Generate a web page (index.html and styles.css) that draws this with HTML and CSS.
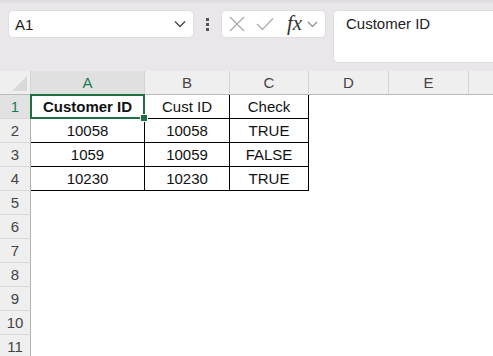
FILE: index.html
```html
<!DOCTYPE html>
<html lang="en">
<head>
    <meta charset="UTF-8">
    <title>Customer ID Check</title>
    <link rel="stylesheet" href="styles.css">
</head>
<body>
    <div class="formula-area">
        <div class="name-box">
            <span>A1</span>
            <svg width="12" height="8" viewBox="0 0 12 8"><path d="M1 1.5 L6 6.5 L11 1.5" fill="none" stroke="#444" stroke-width="1.3"/></svg>
        </div>
        <div class="grip"><i></i><i></i><i></i></div>
        <div class="fn-buttons">
            <svg class="fn-x" width="16" height="16" viewBox="0 0 16 16"><path d="M1 1 L15 15 M15 1 L1 15" stroke="#a8a8a8" stroke-width="1.2"/></svg>
            <svg class="fn-check" width="18" height="14" viewBox="0 0 18 14"><path d="M1 7 L6.5 12.5 L17 1.5" fill="none" stroke="#a8a8a8" stroke-width="1.2"/></svg>
            <span class="fx">fx</span>
            <svg width="11" height="7" viewBox="0 0 11 7"><path d="M1 1 L5.5 5.5 L10 1" fill="none" stroke="#888" stroke-width="1.1"/></svg>
        </div>
        <div class="formula-input">Customer ID</div>
    </div>

    <div class="sheet">
        <div class="row head-row">
            <div class="corner"><span class="tri"></span></div>
            <div class="col-head col-a selected">A</div>
            <div class="col-head col-b">B</div>
            <div class="col-head col-c">C</div>
            <div class="col-head col-d">D</div>
            <div class="col-head col-e">E</div>
            <div class="col-head col-f"></div>
        </div>

        <div class="row">
            <div class="row-head selected">1</div>
            <div class="cell col-a data bold active">Customer ID<span class="handle"></span></div>
            <div class="cell col-b data">Cust ID</div>
            <div class="cell col-c data">Check</div>
        </div>
        <div class="row">
            <div class="row-head">2</div>
            <div class="cell col-a data">10058</div>
            <div class="cell col-b data">10058</div>
            <div class="cell col-c data">TRUE</div>
        </div>
        <div class="row">
            <div class="row-head">3</div>
            <div class="cell col-a data">1059</div>
            <div class="cell col-b data">10059</div>
            <div class="cell col-c data">FALSE</div>
        </div>
        <div class="row">
            <div class="row-head">4</div>
            <div class="cell col-a data">10230</div>
            <div class="cell col-b data">10230</div>
            <div class="cell col-c data">TRUE</div>
        </div>
        <div class="row"><div class="row-head">5</div></div>
        <div class="row"><div class="row-head">6</div></div>
        <div class="row"><div class="row-head">7</div></div>
        <div class="row"><div class="row-head">8</div></div>
        <div class="row"><div class="row-head">9</div></div>
        <div class="row"><div class="row-head">10</div></div>
        <div class="row"><div class="row-head">11</div></div>
    </div>
</body>
</html>
```

FILE: styles.css
```css
body {
    margin: 0;
    font-family: 'Liberation Sans', Arial, sans-serif;
    background: #fff;
    color: #111;
    overflow: hidden;
}
/* Formula bar strip */
.formula-area {
    height: 71px;
    box-sizing: border-box;
    padding: 10px 0 0 8px;
    display: flex;
    align-items: flex-start;
    background: linear-gradient(#dcdadd 0, #e9e7ea 4px);
}
.name-box {
    width: 186px;
    height: 28px;
    box-sizing: border-box;
    background: #fff;
    border: 1px solid #e0dee1;
    border-radius: 5px;
    display: flex;
    align-items: center;
    justify-content: space-between;
    padding: 0 7px 0 6px;
    font-size: 15px;
    color: #222;
}
.grip {
    width: 27px;
    height: 28px;
    display: flex;
    flex-direction: column;
    align-items: center;
    justify-content: center;
    gap: 2px;
}
.grip i {
    width: 3px;
    height: 3px;
    background: #555;
}
.fn-buttons {
    width: 105px;
    height: 28px;
    box-sizing: border-box;
    background: #fff;
    border: 1px solid #e0dee1;
    border-radius: 5px;
    display: flex;
    align-items: center;
    padding-left: 7px;
}
.fn-x {
    margin-right: 11px;
}
.fn-check {
    margin-right: 13px;
}
.fx {
    font-family: 'Liberation Serif', 'Times New Roman', serif;
    font-style: italic;
    font-size: 21px;
    color: #333;
    margin-right: 5px;
    line-height: 1;
    margin-top: -2px;
}
.formula-input {
    flex: 1;
    height: 53px;
    margin-left: 7px;
    box-sizing: border-box;
    background: #fff;
    border: 1px solid #e0dee1;
    border-right: none;
    border-radius: 5px 0 0 5px;
    padding: 4px 0 0 12px;
    font-size: 15px;
    color: #222;
}
/* Grid */
.row {
    display: flex;
    height: 24px;
}
.head-row {
    background: #efefef;
    border-bottom: 1px solid #bcbcbc;
    height: 24px;
    box-sizing: border-box;
}
.corner {
    width: 31px;
    box-sizing: border-box;
    border-right: 1px solid #d4d4d4;
    position: relative;
}
.tri {
    position: absolute;
    right: 3px;
    bottom: 3px;
    width: 0;
    height: 0;
    border-left: 15px solid transparent;
    border-bottom: 15px solid #d9d9d9;
}
.col-head {
    box-sizing: border-box;
    border-right: 1px solid #d4d4d4;
    text-align: center;
    font-size: 15px;
    line-height: 23px;
    color: #444;
}
.col-head.selected {
    background: #e0e0e0;
    color: #1d7a4f;
}
.col-a { width: 114px; }
.col-b { width: 85px; }
.col-c { width: 79px; }
.col-d { width: 80px; }
.col-e { width: 80px; }
.col-f { flex: 1; border-right: none; }
.row-head {
    width: 31px;
    box-sizing: border-box;
    background: #efefef;
    border-right: 1px solid #b4b4b4;
    border-bottom: 1px solid #d8d8d8;
    text-align: center;
    font-size: 15px;
    line-height: 24px;
    color: #444;
}
.row-head.selected {
    background: #e2e2e2;
    color: #1d7a4f;
}
.cell {
    box-sizing: border-box;
    text-align: center;
    font-size: 15px;
    line-height: 23px;
    color: #111;
}
.cell.data {
    border-right: 1px solid #000;
    border-bottom: 1px solid #000;
}
.bold {
    font-weight: bold;
}
/* Active cell outline and fill handle */
.active {
    position: relative;
}
.active::after {
    content: "";
    position: absolute;
    left: -1px;
    top: -1px;
    right: -1px;
    bottom: -1px;
    border: 2px solid #1e6e42;
}
.handle {
    position: absolute;
    right: -4px;
    bottom: -4px;
    width: 6px;
    height: 6px;
    background: #1e6e42;
    border: 1px solid #fff;
    z-index: 2;
}
```
